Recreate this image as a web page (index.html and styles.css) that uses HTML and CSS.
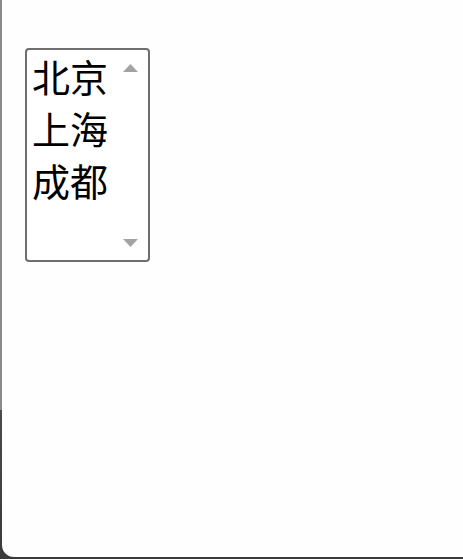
FILE: index.html
```html
<!DOCTYPE html>
<html lang="zh">
<head>
<meta charset="utf-8">
<title>城市</title>
<link rel="stylesheet" href="styles.css">
</head>
<body>
<div class="frame">
  <div class="listbox" role="listbox">
    <div class="options">
      <div class="option">北京</div>
      <div class="option">上海</div>
      <div class="option">成都</div>
    </div>
    <div class="scrollbar">
      <svg class="arrow" width="15" height="8" viewBox="0 0 15 8"><polygon points="7.5,0 15,8 0,8" fill="#a3a3a3"/></svg>
      <svg class="arrow" width="15" height="8" viewBox="0 0 15 8"><polygon points="0,0 15,0 7.5,8" fill="#a3a3a3"/></svg>
    </div>
  </div>
</div>
</body>
</html>
```
FILE: styles.css
```css
html, body {
  margin: 0;
  padding: 0;
}
body {
  height: 559px;
  overflow: hidden;
  background: linear-gradient(to bottom, #8a8a8a 0, #8a8a8a 410px, #4a4a4a 410px, #3a3a3a 100%);
}
.frame {
  margin-left: 2px;
  height: 557px;
  box-sizing: border-box;
  background: #fefefe;
  border-bottom-left-radius: 12px;
  padding: 48px 0 0 23px;
}
.listbox {
  width: 125px;
  height: 214px;
  box-sizing: border-box;
  border: 2px solid #6e6e6e;
  border-radius: 4px;
  background: #fff;
  display: flex;
}
.options {
  flex: 1;
  padding: 0 0 0 5px;
  font-family: "Noto Sans CJK SC", sans-serif;
  font-size: 38px;
  line-height: 52px;
  color: #000;
}
.option {
  white-space: nowrap;
}
.scrollbar {
  width: 15px;
  margin-right: 10px;
  display: flex;
  flex-direction: column;
  justify-content: space-between;
  padding: 14px 0 13px;
}
.arrow {
  display: block;
}
```
